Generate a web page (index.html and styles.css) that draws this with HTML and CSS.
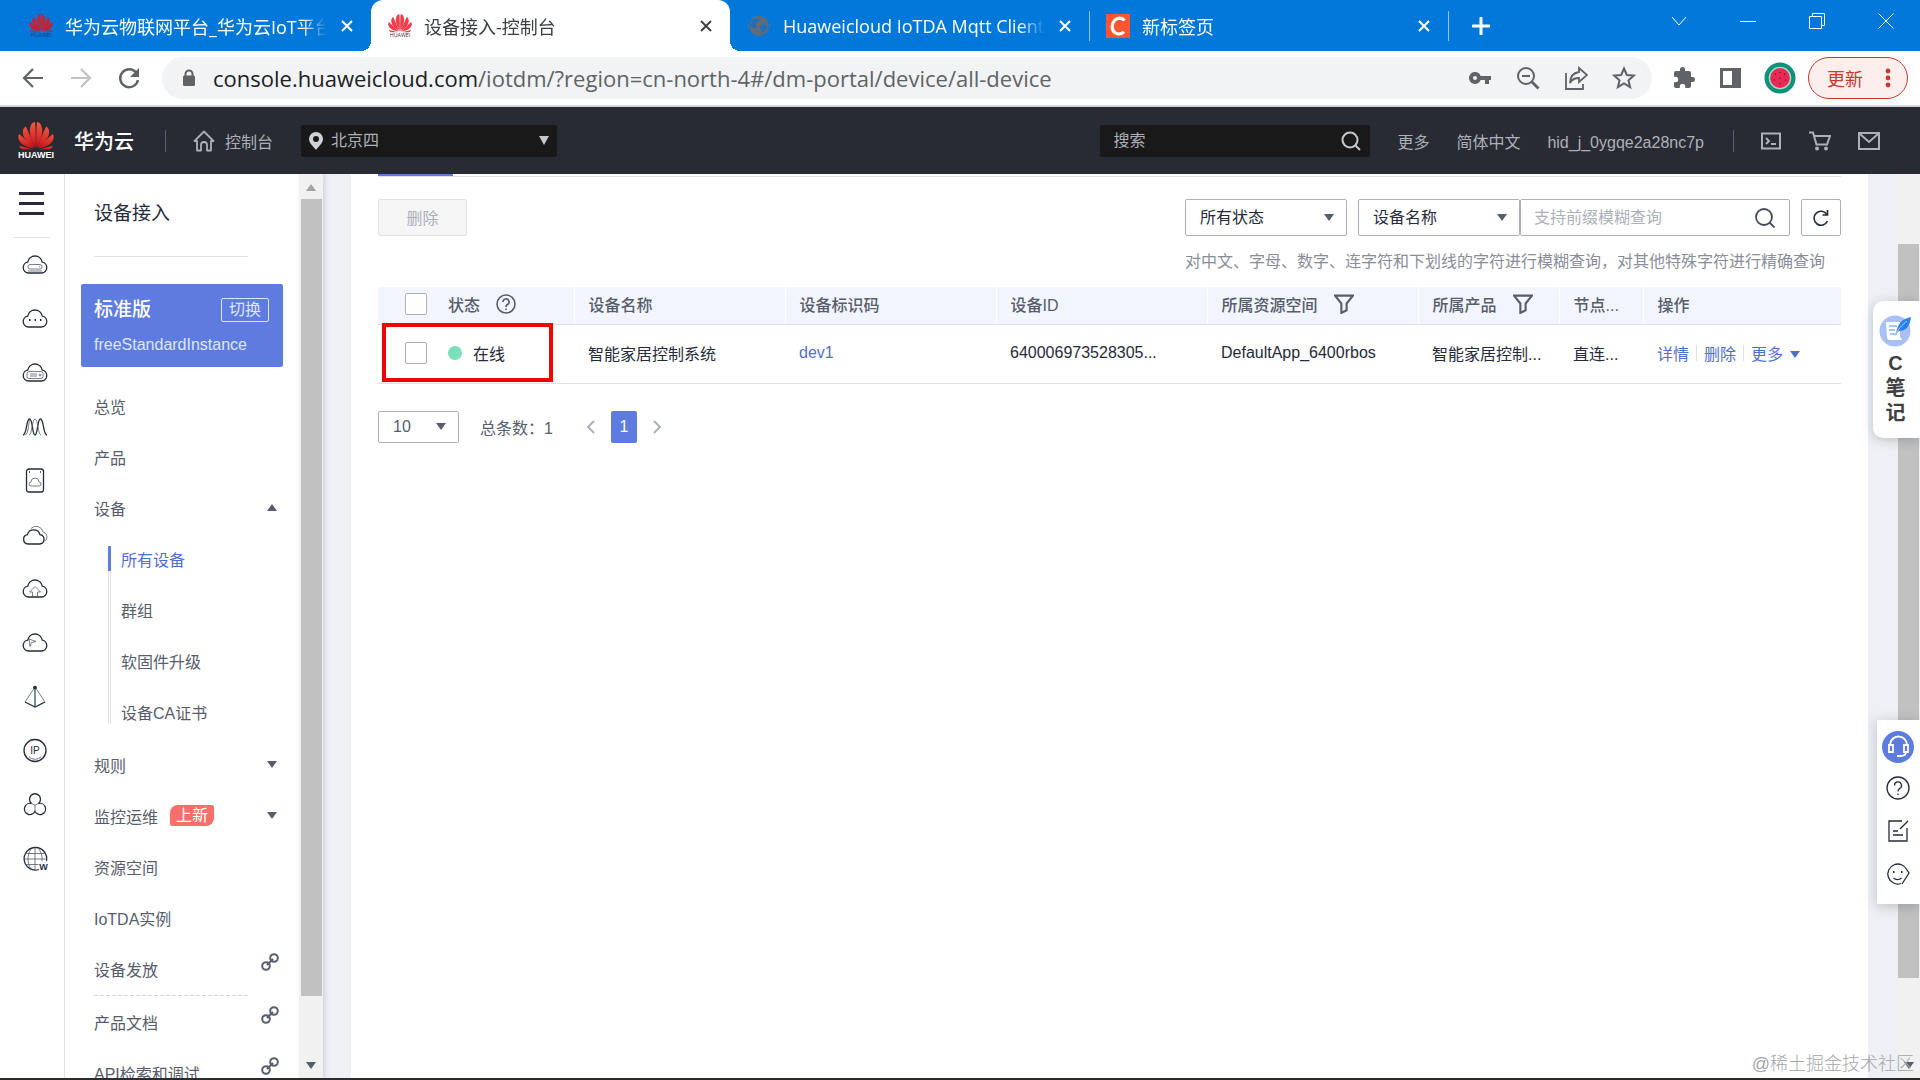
FILE: index.html
```html
<!DOCTYPE html>
<html lang="zh-CN">
<head>
  <meta charset="UTF-8" />
  <meta name="viewport" content="width=device-width, initial-scale=1.0"/>
  <title>设备接入-控制台</title>
  <link rel="stylesheet" href="styles.css">
</head>
<body>
  <!-- shared shapes -->
  <svg class="defs" aria-hidden="true">
    <defs>
      <linearGradient id="petalRed" x1="0" y1="0" x2="0" y2="1">
        <stop offset="0" stop-color="#f4573f"/>
        <stop offset="1" stop-color="#c9101c"/>
      </linearGradient>
      <g id="flower">
        <path d="M17.6 26C12 17 10.500 9 13 3c.7-1.600 2-2.400 4-2.900.8 8 .9 17 .6 25.900z"/>
        <path d="M18.400 26C24 17 25.500 9 23 3c-.7-1.600-2-2.400-4-2.900-.8 8-.9 17-.6 25.900z"/>
        <path d="M16.500 26C8 20.500 4 14 5 8.500c.2-1.600 1.200-3 2.800-4 3.200 6.500 6.200 14 8.700 21.500z"/>
        <path d="M19.500 26C28 20.500 32 14 31 8.500c-.2-1.600-1.200-3-2.800-4-3.200 6.500-6.200 14-8.700 21.500z"/>
        <path d="M15.500 26.400C6 25 .6 20.500.3 15.500c0-1.500.3-2.600 1-3.500 5 4.400 10 9.500 14.200 14.400z"/>
        <path d="M20.500 26.400c9.500-1.400 14.900-5.900 15.200-10.900 0-1.500-.3-2.600-1-3.500-5 4.400-10 9.500-14.200 14.400z"/>
        <path d="M14.500 27.500H5c-1.800-.3-3.200-1.800-3.600-3.500 4.600 1 9 2.200 13.100 3.500z"/>
        <path d="M21.500 27.500H31c1.800-.3 3.200-1.800 3.600-3.500-4.600 1-9 2.200-13.100 3.500z"/>
      </g>
      <path id="cloud" d="M6.500 20a5.500 5.500 0 0 1-.8-10.900A7.500 7.500 0 0 1 13 3a7.500 7.500 0 0 1 7.300 6.100 5.500 5.500 0 0 1-.8 10.900z"/>
      <g id="link">
        <circle cx="5" cy="13" r="3.800"/>
        <circle cx="13" cy="5" r="3.800"/>
        <path d="M6 12l6-6"/>
      </g>
      <path id="funnel" d="M1 1.500h17l-6 7.500v6.500l-5 2.500V9z"/>
      <path id="cross" d="M1 1l10 10M11 1L1 11"/>
    </defs>
  </svg>

  <div class="tabbar">
    <div class="tab">
      <svg class="favicon" viewBox="0 0 36 36"><use href="#flower" fill="#c22338"/><text x="18" y="35" text-anchor="middle" font-size="8" fill="#1d3d6b">HUAWEI</text></svg>
      <span class="tab-title">华为云物联网平台_华为云IoT平台</span>
      <button class="tab-close" aria-label="关闭"><svg viewBox="0 0 12 12"><use href="#cross"/></svg></button>
    </div>
    <div class="tab active">
      <svg class="favicon" viewBox="0 0 36 36"><use href="#flower" fill="#ee3f4b"/><text x="18" y="35" text-anchor="middle" font-size="8" fill="#333">HUAWEI</text></svg>
      <span class="tab-title">设备接入-控制台</span>
      <button class="tab-close" aria-label="关闭"><svg viewBox="0 0 12 12"><use href="#cross"/></svg></button>
    </div>
    <div class="tab">
      <svg class="favicon" viewBox="0 0 24 24"><circle cx="12" cy="12" r="10" fill="#5f6b78"/><path d="M5 7c3-3 6-3 7-2s-1 3-3 4 2 3 0 5-4-2-6-3c0-2 1-3 2-4zM14 11c3-1 5 0 6 1 0 4-3 6-5 7-2-1 0-3-1-4s-2-3 0-4z" fill="#1c6fb8"/></svg>
      <span class="tab-title">Huaweicloud IoTDA Mqtt Client</span>
      <button class="tab-close" aria-label="关闭"><svg viewBox="0 0 12 12"><use href="#cross"/></svg></button>
    </div>
    <div class="tab divided">
      <svg class="favicon" viewBox="0 0 24 24"><path d="M0 0h24v24H0z" fill="#fc5531"/><path d="M18.500 6.500C16 3.500 11.500 3.300 8.500 6.500c-3.200 3.500-3 9.500.2 12 3 2.300 6.800 1.600 9.300-.6" fill="none" stroke="#fff" stroke-width="3.200"/></svg>
      <span class="tab-title">新标签页</span>
      <button class="tab-close" aria-label="关闭"><svg viewBox="0 0 12 12"><use href="#cross"/></svg></button>
    </div>
    <div class="tab-new divided">
      <button aria-label="新建标签页"><svg width="18" height="18" viewBox="0 0 18 18"><path d="M9 1v16M1 9h16" stroke="#fff" stroke-width="3" stroke-linecap="round"/></svg></button>
    </div>
    <div class="window-buttons">
      <button aria-label="搜索标签页"><svg viewBox="0 0 16 16"><path d="M1 4l7 8 7-8"/></svg></button>
      <button aria-label="最小化"><svg viewBox="0 0 16 16"><path d="M0 8.500h16"/></svg></button>
      <button aria-label="还原"><svg viewBox="0 0 16 16"><path d="M.5 3.500h12v12H.5zM3.500 3.500v-3h12v12h-3"/></svg></button>
      <button aria-label="关闭窗口"><svg viewBox="0 0 16 16"><path d="M.5.5l15 15M15.500.5l-15 15"/></svg></button>
    </div>
  </div>

  <div class="toolbar">
    <div class="nav-buttons">
      <button aria-label="后退"><svg viewBox="0 0 24 24"><path d="M22 12H3M12 3l-9 9 9 9" fill="none" stroke="#5f6368" stroke-width="2.200"/></svg></button>
      <button aria-label="前进"><svg viewBox="0 0 24 24"><path d="M2 12h19M12 3l9 9-9 9" fill="none" stroke="#c0c2c5" stroke-width="2.200"/></svg></button>
      <button aria-label="刷新"><svg viewBox="0 0 24 24"><path d="M19.500 7A9 9 0 1 0 21 14" fill="none" stroke="#5f6368" stroke-width="2.400"/><path d="M22 2v9h-9z" fill="#5f6368"/></svg></button>
    </div>
    <div class="omnibox">
      <svg class="lock" width="14" height="18" viewBox="0 0 14 18"><path d="M3.500 8V5a3.500 3.500 0 0 1 7 0v3" fill="none" stroke="#5f6368" stroke-width="2"/><rect x="1" y="6.500" width="12" height="10.500" rx="1.500" fill="#5f6368"/></svg>
      <div class="url"><b>console.huaweicloud.com</b>/iotdm/?region=cn-north-4#/dm-portal/device/all-device</div>
      <button aria-label="密码"><svg viewBox="0 0 24 24"><path d="M7 6a6 6 0 1 0 5.600 8H17v4h4v-4h2v-4H12.600A6 6 0 0 0 7 6zm0 8a2 2 0 1 1 0-4 2 2 0 0 1 0 4z" fill="#5f6368"/></svg></button>
      <button aria-label="缩放"><svg viewBox="0 0 24 24"><g fill="none" stroke="#5f6368" stroke-width="2"><circle cx="10" cy="10" r="8"/><path d="M15.500 15.500l7 7" stroke-width="2.800"/><path d="M6 10h8"/></g></svg></button>
      <button aria-label="分享"><svg viewBox="0 0 24 24"><g fill="none" stroke="#5f6368" stroke-width="1.800"><path d="M2 7v16h17v-5"/><path d="M15 2l8 7-8 7v-4c-4 0-7 1-9 5 0-6 3-10 9-11z"/></g></svg></button>
      <button aria-label="收藏"><svg viewBox="0 0 24 24"><path d="M12 2.500l2.800 6.500 7 .6-5.300 4.700 1.600 6.900-6.100-3.700-6.100 3.700 1.600-6.900L2.200 9.600l7-.6z" fill="none" stroke="#5f6368" stroke-width="2"/></svg></button>
    </div>
    <div class="extensions">
      <button aria-label="扩展程序"><svg viewBox="0 0 24 24"><path d="M20.500 11H19V7a2 2 0 0 0-2-2h-4V3.500a2.500 2.500 0 0 0-5 0V5H4a2 2 0 0 0-2 2v3.800h1.500a2.700 2.700 0 0 1 0 5.400H2V20c0 1.100.9 2 2 2h3.800v-1.500a2.700 2.700 0 0 1 5.400 0V22H17a2 2 0 0 0 2-2v-4h1.500a2.500 2.500 0 0 0 0-5z" fill="#5f6368"/></svg></button>
      <button aria-label="侧边栏"><svg viewBox="0 0 24 24"><path d="M2 2h21v20H2zM5 5v14h9V5z" fill="#5f6368" fill-rule="evenodd"/></svg></button>
      <button class="avatar" aria-label="用户"><svg viewBox="0 0 34 34"><circle cx="17" cy="17" r="16.500" fill="#11907a"/><circle cx="17" cy="17" r="12" fill="#9fe0c4"/><circle cx="17" cy="17" r="10.500" fill="#ea2a55"/><g fill="#5a1024"><circle cx="12" cy="13" r=".7"/><circle cx="17" cy="11" r=".7"/><circle cx="22" cy="13" r=".7"/><circle cx="11" cy="19" r=".7"/><circle cx="17" cy="17" r=".7"/><circle cx="23" cy="19" r=".7"/><circle cx="17" cy="23" r=".7"/></g></svg></button>
      <button class="update">更新<svg width="6" height="20" viewBox="0 0 6 20"><g fill="#c5392f"><circle cx="3" cy="3" r="2.400"/><circle cx="3" cy="10" r="2.400"/><circle cx="3" cy="17" r="2.400"/></g></svg></button>
    </div>
  </div>

  <header class="header">
    <a class="logo" href="#">
      <svg width="36" height="28" viewBox="0 0 36 28"><use href="#flower" fill="url(#petalRed)"/></svg>
      <span>HUAWEI</span>
    </a>
    <span class="brand">华为云</span>
    <a class="console-link" href="#">
      <svg width="22" height="22" viewBox="0 0 22 22"><path d="M1.500 11L11 1.500 20.500 11H18v9.500h-4V15a3 3 0 0 0-6 0v5.500H4V11z" fill="none" stroke="#adb0b8" stroke-width="1.800" stroke-linejoin="round"/></svg>
      控制台
    </a>
    <div class="region">
      <svg width="14" height="18" viewBox="0 0 14 18"><path d="M7 0a7 7 0 0 0-7 7c0 4 4 7 7 11 3-4 7-7 7-11a7 7 0 0 0-7-7zm0 10a3 3 0 1 1 0-6 3 3 0 0 1 0 6z" fill="#d0d2d6"/></svg>
      <select aria-label="区域"><option>北京四</option></select>
      <i class="caret"></i>
    </div>
    <div class="header-search">
      <input type="text" placeholder="搜索" aria-label="搜索">
      <svg width="20" height="20" viewBox="0 0 20 20"><g fill="none" stroke="#c5c7cc" stroke-width="2"><circle cx="9" cy="9" r="7.500"/><path d="M14 14l5 5"/></g></svg>
    </div>
    <nav class="header-links">
      <a href="#">更多</a>
      <a href="#">简体中文</a>
      <a href="#">hid_j_0ygqe2a28nc7p</a>
    </nav>
    <div class="header-icons">
      <button aria-label="CloudShell"><svg viewBox="0 0 22 22"><path d="M2 3.500h18v15H2zM6 8l3 3-3 3M11 14h5"/></svg></button>
      <button aria-label="购物车"><svg viewBox="0 0 22 22"><path d="M0 2.500h4l3.500 12H18L21 6H5"/><circle cx="8" cy="18.500" r="1"/><circle cx="17" cy="18.500" r="1"/></svg></button>
      <button aria-label="消息"><svg viewBox="0 0 22 22"><path d="M1 3h20v16H1zM2 4l9 8 9-8"/></svg></button>
    </div>
  </header>

  <div class="main">
    <aside class="rail">
      <button class="hamburger" aria-label="服务列表"><i></i><i></i><i></i></button>
      <a href="#" aria-label="弹性云服务器"><svg viewBox="0 0 26 24"><use href="#cloud"/><rect class="thin" x="6" y="11.500" width="14" height="4.500" rx="2"/><path class="thin" d="M6 18h14M17 13.700h1"/></svg></a>
      <a href="#" aria-label="裸金属服务器"><svg viewBox="0 0 26 24"><use href="#cloud"/><path d="M7 13h1.500M12.500 13H14M18 13h1.500" stroke-width="2"/></svg></a>
      <a href="#" aria-label="云硬盘"><svg viewBox="0 0 26 24"><use href="#cloud"/><rect class="thin" x="5" y="10.500" width="16" height="7" rx="2"/><path class="thin" d="M8 13h7M8 15h7"/><circle class="thin" cx="18" cy="14" r="1"/></svg></a>
      <a href="#" aria-label="弹性伸缩"><svg viewBox="0 0 26 24"><path d="M1 20C5 20 4 4 7.500 4S10 20 13 20 15 4 18.500 4 21 20 25 20"/><path class="thin" d="M3 20C7 20 6 4 9 4M7 20c3 0 3-16 6-16s3 16 6 16"/></svg></a>
      <a href="#" aria-label="专属主机"><svg viewBox="0 0 26 24"><rect x="4.500" y="0" width="17" height="23" rx="2.500"/><path class="thin" d="M9 17a2 2 0 0 1 0-4 4 4 0 0 1 8 0 2 2 0 0 1 0 4z"/><path d="M7 3h1M18 3h1"/></svg></a>
      <a href="#" aria-label="对象存储"><svg viewBox="0 0 26 24"><path d="M6 21a4.700 4.700 0 0 1-.6-9.300 6.500 6.500 0 0 1 12.600 0A4.700 4.700 0 0 1 18 21z"/><path class="thin" d="M9 5.500a7 7 0 0 1 12 3.500 5 5 0 0 1 1 9.500"/></svg></a>
      <a href="#" aria-label="云备份"><svg viewBox="0 0 26 24"><use href="#cloud"/><path class="thin" d="M10.500 19.500V15H7.500L13 9.500l5.500 5.500h-3v4.500"/></svg></a>
      <a href="#" aria-label="虚拟私有云"><svg viewBox="0 0 26 24"><use href="#cloud"/><path class="thin" d="M7 8l7 2.500-4.500 1-1.500 4z"/></svg></a>
      <a href="#" aria-label="弹性负载均衡"><svg viewBox="0 0 26 24"><path d="M3 17l10 5 10-5"/><path class="thin" d="M13 2L3 17M13 2l10 15"/><path d="M13 2v19" stroke="#2c5f63"/><circle cx="13" cy="2.500" r="1.200" fill="#252b3a"/></svg></a>
      <a href="#" aria-label="弹性公网IP"><svg viewBox="0 0 26 24"><circle cx="13" cy="11.500" r="11"/><path class="thin" d="M7 18a9 9 0 0 0 12 0"/><text x="13" y="15" text-anchor="middle" font-size="10">IP</text></svg></a>
      <a href="#" aria-label="区块链"><svg viewBox="0 0 26 24"><path d="M9.500 10.500a5.500 5.500 0 1 1 7 0"/><path d="M9.500 10.500A5.600 5.600 0 1 0 13 18.500a5.600 5.600 0 1 0 3.500-8"/><path class="thin" d="M9.500 10.500L13 12l3.500-1.500M13 12v6"/></svg></a>
      <a href="#" aria-label="域名注册"><svg viewBox="0 0 26 24"><path d="M17 22.500A11.300 11.300 0 1 1 24.500 14"/><path class="thin" d="M3.500 6.500h19M2 12h22.500M3.500 17.500h13M13 1v22M9 2c-4 6-4 14 0 20M17 2c2.500 4 3.500 8 3 12"/><text x="21.500" y="22.500" text-anchor="middle" font-size="9" font-weight="bold">W</text></svg></a>
    </aside>

    <div class="sidebar">
      <h3>设备接入</h3>
      <div class="instance">
        <div class="instance-top">
          <strong>标准版</strong>
          <button>切换</button>
        </div>
        <span>freeStandardInstance</span>
      </div>
      <ul class="menu">
        <li><a href="#">总览</a></li>
        <li><a href="#">产品</a></li>
        <li><a href="#">设备<i class="caret up"></i></a>
          <ul class="submenu">
            <li class="selected"><a href="#">所有设备</a></li>
            <li><a href="#">群组</a></li>
            <li><a href="#">软固件升级</a></li>
            <li><a href="#">设备CA证书</a></li>
          </ul>
        </li>
        <li><a href="#">规则<i class="caret"></i></a></li>
        <li><a href="#">监控运维<em>上新</em><i class="caret"></i></a></li>
        <li><a href="#">资源空间</a></li>
        <li><a href="#">IoTDA实例</a></li>
        <li><a href="#">设备发放<svg viewBox="0 0 18 18"><use href="#link"/></svg></a></li>
        <li class="split"><a href="#">产品文档<svg viewBox="0 0 18 18"><use href="#link"/></svg></a></li>
        <li><a href="#">API检索和调试<svg viewBox="0 0 18 18"><use href="#link"/></svg></a></li>
      </ul>
    </div>
    <div class="scrollbar side-scroll">
      <i class="caret up"></i>
      <div class="thumb"></div>
      <i class="caret"></i>
    </div>

    <div class="content">
      <div class="tab-line"></div>
      <div class="actions">
        <button class="btn-delete" disabled>删除</button>
        <div class="filters">
          <div class="select"><select aria-label="状态"><option>所有状态</option></select><i class="caret"></i></div>
          <div class="search-group">
            <div class="select"><select aria-label="查询字段"><option>设备名称</option></select><i class="caret"></i></div>
            <div class="search-box">
              <input type="text" placeholder="支持前缀模糊查询" aria-label="查询">
              <svg width="20" height="20" viewBox="0 0 20 20"><g fill="none" stroke="#464c59" stroke-width="1.800"><circle cx="9" cy="9" r="8"/><path d="M14.500 14.500l5 5"/></g></svg>
            </div>
          </div>
          <button class="btn-refresh" aria-label="刷新"><svg width="16" height="16" viewBox="0 0 16 16"><path d="M14 4.500A7 7 0 1 0 14.500 11M14.500 0v5h-5" fill="none" stroke="#252b3a" stroke-width="1.600"/></svg></button>
        </div>
      </div>
      <p class="hint">对中文、字母、数字、连字符和下划线的字符进行模糊查询，对其他特殊字符进行精确查询</p>

      <table class="devices">
        <colgroup>
          <col class="c-status"><col class="c-name"><col class="c-name"><col class="c-name"><col class="c-name"><col class="c-product"><col class="c-node"><col class="c-ops">
        </colgroup>
        <thead>
          <tr>
            <th><div class="status"><input type="checkbox" aria-label="全选">状态<svg class="help" width="20" height="20" viewBox="0 0 20 20"><circle cx="10" cy="10" r="9"/><path d="M7 8a3 3 0 1 1 4.500 2.500C10.300 11.200 10 11.700 10 13M10 14.500v1.500"/></svg></div></th>
            <th>设备名称</th>
            <th>设备标识码</th>
            <th>设备ID</th>
            <th><div class="filter">所属资源空间<svg class="funnel" width="20" height="20" viewBox="0 0 19 19"><use href="#funnel"/></svg></div></th>
            <th><div class="filter">所属产品<svg class="funnel" width="20" height="20" viewBox="0 0 19 19"><use href="#funnel"/></svg></div></th>
            <th>节点...</th>
            <th>操作</th>
          </tr>
        </thead>
        <tbody>
          <tr>
            <td class="marked"><div class="status"><input type="checkbox" aria-label="选择 dev1"><span class="dot"></span>在线</div></td>
            <td>智能家居控制系统</td>
            <td><a href="#">dev1</a></td>
            <td>640006973528305...</td>
            <td>DefaultApp_6400rbos</td>
            <td>智能家居控制...</td>
            <td>直连...</td>
            <td><div class="ops"><a href="#">详情</a><a href="#">删除</a><a href="#">更多<i class="caret"></i></a></div></td>
          </tr>
        </tbody>
      </table>

      <div class="pagination">
        <div class="select small"><select aria-label="每页条数"><option>10</option></select><i class="caret"></i></div>
        <span class="total">总条数：1</span>
        <button aria-label="上一页"><svg width="8" height="14" viewBox="0 0 8 14"><path d="M7 1L1 7l6 6"/></svg></button>
        <button class="current">1</button>
        <button aria-label="下一页"><svg width="8" height="14" viewBox="0 0 8 14"><path d="M1 1l6 6-6 6"/></svg></button>
      </div>
    </div>
    <div class="scrollbar page-scroll">
      <div class="thumb"></div>
      <i class="caret"></i>
    </div>

    <div class="note">
      <svg width="34" height="34" viewBox="0 0 34 34"><circle cx="16" cy="18" r="15.500" fill="#a9c0f5"/><path d="M7 9h14v15c0 1 2 1 2 3H11c-2 0-3-1-3-3z" fill="#fff"/><path d="M10 13h8M10 17h6M11 21h7" stroke="#8fb0ee" stroke-width="1.500"/><path d="M17 21c1-10 6-15 15-17-1 9-5 14-12 14z" fill="#2b7df5"/><path d="M16 23c3-7 7-11 12-15" fill="none" stroke="#bcd6ff"/></svg>
      <span>C</span><span>笔</span><span>记</span>
    </div>

    <div class="support">
      <button class="headset" aria-label="在线客服"><svg viewBox="0 0 24 24"><path d="M4 10a8.500 8.500 0 0 1 17 0M3 10h4v7H3zM18 10h4v7h-4zM20 17c0 3-3 4-6 4M11 21h3"/></svg></button>
      <button aria-label="帮助"><svg viewBox="0 0 24 24"><circle cx="12" cy="12" r="11"/><path d="M8.500 9.500a3.500 3.500 0 1 1 5 3.100C12.300 13.300 12 14 12 15.500M12 17.500V19"/></svg></button>
      <button aria-label="建议"><svg viewBox="0 0 24 24"><path d="M16 2H3v20h18V9M14 10l8-8M7 12h5M7 16h10"/></svg></button>
      <button aria-label="反馈"><svg viewBox="0 0 24 24"><path d="M21 8A10 10 0 1 0 15 21.500M16 22l7-11-2-3M7.500 16a6 6 0 0 0 8 0"/><path d="M7 10h1.500M15 10h1.500" stroke-width="2"/></svg></button>
    </div>
    <div class="watermark">@稀土掘金技术社区</div>
  </div>
</body>
</html>
```
FILE: styles.css
```css
*,
*::before,
*::after {
  box-sizing: border-box;
}

body {
  margin: 0;
  height: 100vh;
  display: flex;
  flex-direction: column;
  overflow: hidden;
  border-bottom: 2px solid #2b2b2f;
  font-family: "Liberation Sans", "Noto Sans CJK SC", sans-serif;
  font-size: 16px;
  color: #252b3a;
  background: #eef0f5;
}

button,
input,
select {
  font: inherit;
  color: inherit;
}

button {
  padding: 0;
  border: none;
  background: none;
  cursor: pointer;
}

button svg {
  display: block;
}

a {
  color: inherit;
  text-decoration: none;
}

.defs {
  position: absolute;
  width: 0;
  height: 0;
}

.caret {
  flex: none;
  border: 5px solid transparent;
  border-top: 7px solid #575d6c;
  border-bottom: 0;
}

.caret.up {
  border-top: 0;
  border-bottom: 7px solid #575d6c;
}

/* browser tabs */
.tabbar {
  display: flex;
  height: 51px;
  flex: none;
  padding-left: 12px;
  background: #0078d9;
  color: white;
  font-family: "Open Sans", "Noto Sans CJK SC", sans-serif;
  font-size: 18px;
}

.tab {
  display: flex;
  align-items: center;
  flex: 0 1 359px;
  min-width: 0;
  padding: 0 18px 0 17px;
}

.tab.active {
  position: relative;
  background: white;
  color: #3c4043;
  border-radius: 12px 12px 0 0;
}

.tab.active::before,
.tab.active::after {
  content: "";
  position: absolute;
  bottom: 0;
  width: 10px;
  height: 10px;
}

.tab.active::before {
  right: 100%;
  background: radial-gradient(circle at 0 0, transparent 10px, white 10px);
}

.tab.active::after {
  left: 100%;
  background: radial-gradient(circle at 100% 0, transparent 10px, white 10px);
}

.divided {
  background: linear-gradient(#8fc4f0, #8fc4f0) left center / 1px 30px no-repeat;
}

.favicon {
  width: 24px;
  height: 24px;
  flex: none;
  overflow: visible;
}

.tab-title {
  flex: 1;
  margin: 0 14px 0 12px;
  overflow: hidden;
  white-space: nowrap;
  -webkit-mask-image: linear-gradient(to right, black 90%, transparent);
  mask-image: linear-gradient(to right, black 90%, transparent);
}

.tab-close svg {
  width: 12px;
  height: 12px;
  stroke: currentColor;
  stroke-width: 2;
}

.tab-new {
  display: flex;
  align-items: center;
  padding-left: 24px;
}

.window-buttons {
  display: flex;
  height: 42px;
  margin-left: auto;
}

.window-buttons button {
  width: 69px;
}

.window-buttons svg {
  width: 16px;
  height: 16px;
  margin: 0 auto;
  fill: none;
  stroke: white;
}

/* address bar */
.toolbar {
  display: flex;
  align-items: center;
  flex: none;
  height: 56px;
  padding: 0 12px 0 21px;
  background: white;
  border-bottom: 2px solid #d5d6da;
}

.toolbar button svg {
  width: 24px;
  height: 24px;
}

.nav-buttons {
  display: flex;
  gap: 24px;
}

.omnibox {
  display: flex;
  align-items: center;
  gap: 24px;
  flex: 1;
  height: 42px;
  margin-left: 21px;
  padding: 0 16px 0 20px;
  border-radius: 21px;
  background: #f1f3f4;
}

.lock {
  flex: none;
}

.url {
  flex: 1;
  margin-left: -7px;
  color: #5f6368;
  font-family: "Open Sans", "Noto Sans CJK SC", sans-serif;
  font-size: 22px;
  white-space: nowrap;
  overflow: hidden;
}

.url b {
  color: #202124;
  font-weight: normal;
}

.extensions {
  display: flex;
  align-items: center;
  margin-left: 20px;
}

.extensions button {
  margin-right: 22px;
}

.extensions .avatar {
  margin-right: 12px;
}

.extensions .avatar svg {
  width: 32px;
  height: 32px;
}

.extensions .update {
  display: flex;
  align-items: center;
  justify-content: space-between;
  width: 100px;
  height: 42px;
  margin: 0;
  padding: 0 16px 0 18px;
  border: 1px solid #c5392f;
  border-radius: 21px;
  background: #fceeed;
  color: #c5392f;
  font-size: 18px;
}

.toolbar .update svg {
  width: 6px;
  height: 20px;
}

/* console header */
.header {
  display: flex;
  align-items: center;
  flex: none;
  height: 67px;
  padding: 0 40px 0 18px;
  background: #282b33;
  color: #adb0b8;
}

.logo {
  display: flex;
  flex-direction: column;
  align-items: center;
  color: white;
  font-size: 9px;
  font-weight: bold;
  line-height: 10px;
}

.brand {
  margin-left: 20px;
  padding-right: 31px;
  color: white;
  font-size: 20px;
  font-weight: 500;
}

.console-link {
  display: flex;
  align-items: center;
  gap: 10px;
  padding-left: 28px;
  background: linear-gradient(#575d6c, #575d6c) left center / 1px 22px no-repeat;
}

.region {
  position: relative;
  display: flex;
  align-items: center;
  width: 256px;
  height: 32px;
  margin-left: 28px;
  padding: 0 8px;
  border-radius: 2px;
  background: #191919;
}

.region select {
  flex: 1;
  padding: 0 8px;
  border: none;
  background: none;
  appearance: none;
}

.region .caret {
  border-top: 9px solid #c5c7cc;
}

.header-search {
  display: flex;
  align-items: center;
  width: 270px;
  height: 32px;
  margin-left: auto;
  padding: 0 9px 0 13px;
  border-radius: 2px;
  background: #191919;
}

.header-search input {
  flex: 1;
  min-width: 0;
  padding: 0;
  border: none;
  outline: none;
  background: none;
}

.header-search input::placeholder {
  color: #adb0b8;
}

.header-links {
  display: flex;
  align-items: baseline;
  gap: 27px;
  margin-left: 27px;
}

.header-icons {
  display: flex;
  gap: 27px;
  margin-left: 29px;
  padding-left: 27px;
  background: linear-gradient(#575d6c, #575d6c) left center / 1px 22px no-repeat;
}

.header-icons svg {
  width: 22px;
  height: 22px;
  fill: none;
  stroke: #adb0b8;
  stroke-width: 2;
}

/* body */
.main {
  position: relative;
  display: flex;
  flex: 1;
  min-height: 0;
}

.rail {
  display: flex;
  flex-direction: column;
  align-items: center;
  width: 65px;
  flex: none;
  padding-left: 6px;
  background: white;
  border-right: 1px solid #dfe1e6;
}

.hamburger {
  display: flex;
  flex-direction: column;
  justify-content: center;
  align-items: center;
  gap: 7px;
  width: 37px;
  height: 64px;
  margin-right: 7px;
  padding-bottom: 4px;
  border-bottom: 1px solid #dfe1e6;
}

.hamburger i {
  width: 25px;
  height: 3px;
  background: #2b2838;
}

.rail a {
  display: flex;
  align-items: center;
  height: 54px;
}

.rail svg {
  width: 26px;
  height: 24px;
  overflow: visible;
  fill: none;
  stroke: #252b3a;
  stroke-width: 1.3;
}

.rail .thin {
  stroke: #575d6c;
  stroke-width: 0.8;
}

.rail text {
  fill: #252b3a;
  stroke: none;
}

.sidebar {
  width: 234px;
  flex: none;
  padding: 0 16px;
  background: white;
  overflow: hidden;
}

.sidebar h3 {
  height: 83px;
  margin: 0 35px 27px 13px;
  padding-top: 25px;
  border-bottom: 1px solid #dfe1e6;
  font-size: 19px;
  font-weight: normal;
  line-height: 30px;
}

.instance {
  height: 83px;
  padding: 14px 14px 0 13px;
  border-radius: 2px;
  background: #5e7ce0;
  color: #dfe6fb;
}

.instance-top {
  display: flex;
  align-items: center;
  justify-content: space-between;
  height: 24px;
  margin-bottom: 14px;
}

.instance strong {
  color: white;
  font-size: 19px;
  font-weight: 500;
  line-height: 24px;
}

.instance button {
  width: 48px;
  height: 24px;
  border: 1px solid #dfe6fb;
  border-radius: 2px;
  line-height: 22px;
}

.menu,
.submenu {
  list-style: none;
  margin: 0;
  padding: 0;
}

.menu {
  padding-top: 13px;
  color: #575d6c;
}

.menu a {
  display: flex;
  align-items: center;
  height: 51px;
  padding: 0 4px 0 13px;
  white-space: nowrap;
}

.menu .caret,
.menu svg {
  margin-left: auto;
}

.menu .caret {
  margin-right: 2px;
}

.menu svg {
  width: 18px;
  height: 18px;
  margin-bottom: 14px;
  fill: none;
  stroke: #575d6c;
  stroke-width: 2;
}

.menu em {
  margin-left: 12px;
  padding: 0 6px;
  border-radius: 8px 2px;
  background: #f66f6a;
  color: white;
  font-style: normal;
  line-height: 21px;
}

.submenu {
  padding-bottom: 2px;
  background: linear-gradient(to right, #dfe1e6 1px, white 1px, white 2px, #dfe1e6 2px) 27px 13px / 3px 178px no-repeat;
}

.submenu li {
  display: flex;
  align-items: center;
  margin-left: 27px;
}

.submenu a {
  padding: 0 0 0 13px;
}

.submenu .selected {
  color: #526ecc;
}

.submenu .selected::before {
  content: "";
  width: 3px;
  height: 25px;
  background: #5e7ce0;
}

.submenu .selected a {
  padding-left: 10px;
}

.menu .split {
  margin-top: 1px;
  padding-top: 1px;
  background: repeating-linear-gradient(to right, #d5d7dc 0, #d5d7dc 4px, transparent 4px, transparent 6px) 13px 0 / 154px 1px no-repeat;
}

.scrollbar {
  display: flex;
  flex-direction: column;
  align-items: center;
  flex: none;
  width: 23px;
  background: #f1f1f1;
}

.scrollbar .thumb {
  width: 21px;
  background: #c1c1c1;
}

.side-scroll {
  width: 24px;
  padding: 10px 0 9px;
  box-shadow: 2px 0 5px rgba(37, 43, 58, 0.15);
}

.side-scroll .thumb {
  height: 90%;
  margin: 8px 0 auto;
}

.side-scroll .caret.up {
  border-bottom-color: #a3a3a3;
}

.page-scroll {
  padding-bottom: 9px;
}

.page-scroll .thumb {
  height: 82%;
  margin: 70px 0 auto;
}

/* content */
.content {
  flex: 1;
  min-width: 0;
  margin: 0 29px 0 28px;
  padding: 0 27px;
  background: white;
}

.tab-line {
  height: 3px;
  border-bottom: 1px solid #dfe1e6;
  background: linear-gradient(#5e7ce0, #5e7ce0) left top / 75px 2px no-repeat;
}

.actions {
  display: flex;
  justify-content: space-between;
  margin-top: 22px;
}

.btn-delete {
  width: 89px;
  height: 37px;
  padding-bottom: 2px;
  border: 1px solid #dfe1e6;
  border-radius: 2px;
  background: #f5f5f6;
  color: #adb0b8;
}

.filters {
  display: flex;
  gap: 11px;
}

.select {
  position: relative;
  width: 162px;
}

.select select {
  width: 100%;
  height: 37px;
  padding: 0 14px;
  border: 1px solid #adb0b8;
  border-radius: 2px;
  background: white;
  appearance: none;
}

.select .caret {
  position: absolute;
  right: 13px;
  top: 50%;
  margin-top: -4px;
  pointer-events: none;
}

.search-group {
  display: flex;
}

.search-box {
  display: flex;
  align-items: center;
  width: 270px;
  height: 37px;
  padding: 0 14px 0 13px;
  border: 1px solid #adb0b8;
  border-radius: 2px;
}

.search-box input {
  flex: 1;
  min-width: 0;
  padding: 0;
  border: none;
  outline: none;
}

.search-box input::placeholder {
  color: #adb0b8;
}

.btn-refresh {
  width: 40px;
  height: 37px;
  border: 1px solid #adb0b8;
  border-radius: 2px;
}

.btn-refresh svg {
  margin: 0 auto;
}

.hint {
  width: 656px;
  margin: 14px 0 13px auto;
  color: #8a8e99;
  line-height: 24px;
  white-space: nowrap;
}

.devices {
  width: 100%;
  border-collapse: collapse;
  table-layout: fixed;
}

.c-status {
  width: 196px;
}

.c-name {
  width: 211px;
}

.c-product {
  width: 141px;
}

.c-node {
  width: 84px;
}

.c-ops {
  width: 198px;
}

.devices th,
.devices td {
  padding: 0 0 2px 14px;
  border-bottom: 1px solid #dfe1e6;
  text-align: left;
  white-space: nowrap;
}

.devices th {
  height: 37px;
  background: #f2f5fc;
  color: #575d6c;
  font-weight: 500;
}

.devices th + th {
  border-left: 1px solid white;
}

.devices td {
  height: 59px;
}

.devices td a {
  color: #526ecc;
}

.devices .status {
  display: flex;
  align-items: center;
  padding-left: 13px;
}

.filter {
  display: flex;
  align-items: center;
}

input[type="checkbox"] {
  width: 22px;
  height: 22px;
  margin: 0 21px 0 0;
  border: 1px solid #adb0b8;
  border-radius: 2px;
  background: white;
  appearance: none;
}

.dot {
  width: 14px;
  height: 14px;
  margin-right: 11px;
  border-radius: 50%;
  background: #7adfbb;
}

.help,
.funnel {
  margin-left: 16px;
  fill: none;
  stroke: #575d6c;
  stroke-width: 2;
}

.help {
  stroke-width: 1.6;
}

.marked {
  position: relative;
}

/* highlight round the status cell */
.marked::after {
  content: "";
  position: absolute;
  top: -2px;
  bottom: 1px;
  left: 4px;
  right: 21px;
  border: 4px solid #ee0404;
}

.ops {
  display: flex;
  align-items: center;
}

.ops a + a {
  margin-left: 7px;
  padding-left: 8px;
  background: linear-gradient(#dfe1e6, #dfe1e6) left center / 1px 16px no-repeat;
}

.ops .caret {
  display: inline-block;
  margin-left: 7px;
  border-top-color: #526ecc;
  vertical-align: 2px;
}

.pagination {
  display: flex;
  align-items: center;
  margin-top: 27px;
  color: #575d6c;
}

.select.small {
  width: 81px;
}

.select.small select {
  height: 32px;
}

.total {
  margin: 0 34px 0 21px;
}

.pagination svg {
  fill: none;
  stroke: #adb0b8;
  stroke-width: 2;
}

.pagination .current {
  width: 26px;
  height: 32px;
  margin: 0 16px;
  border-radius: 2px;
  background: #5e7ce0;
  color: white;
}

/* floating widgets */
.note,
.support {
  position: absolute;
  right: 0;
  display: flex;
  flex-direction: column;
  align-items: center;
  background: white;
  box-shadow: 0 2px 12px rgba(37, 43, 58, 0.25);
}

.note {
  top: 127px;
  width: 47px;
  padding: 12px 2px 12px 0;
  border-radius: 10px 0 0 10px;
  color: #404040;
  font-size: 20px;
  font-weight: bold;
  line-height: 25px;
}

.note svg {
  margin-bottom: 4px;
}

.support {
  top: 546px;
  width: 43px;
  gap: 19px;
  padding: 11px 1px 18px 0;
}

.support svg {
  width: 24px;
  height: 24px;
  fill: none;
  stroke: #252b3a;
  stroke-width: 1.3;
}

.support .headset {
  padding: 4px;
  margin-bottom: -6px;
  border-radius: 50%;
  background: #5e7ce0;
}

.support .headset svg {
  stroke: white;
  stroke-width: 1.8;
}

.watermark {
  position: absolute;
  right: 6px;
  bottom: 0;
  color: #a5a5a8;
  font-size: 18px;
  font-weight: 300;
  line-height: 27px;
}
```
